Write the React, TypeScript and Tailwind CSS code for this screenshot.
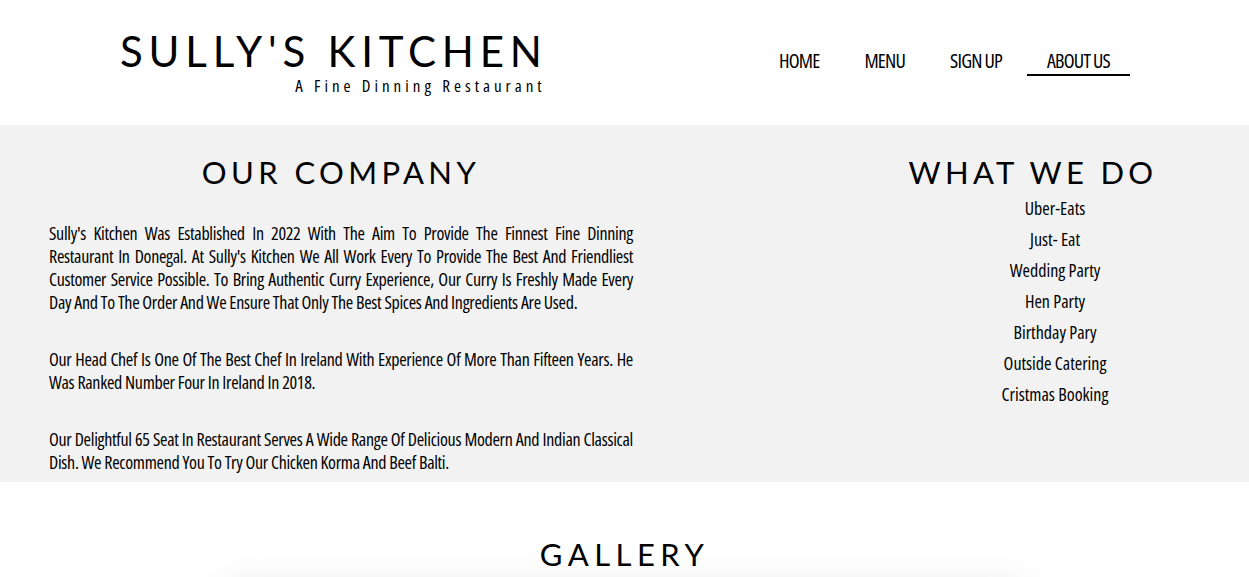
import React from "react";

export default function App() {
  const services = [
    "Uber-Eats",
    "Just- Eat",
    "Wedding Party",
    "Hen Party",
    "Birthday Pary",
    "Outside Catering",
    "Cristmas Booking",
  ];
  return (
    <div className="w-[1249px] bg-white text-black">
      <header className="h-[125px] flex items-start justify-between pl-[120px] pr-[119px]">
        <div className="flex flex-col items-end pt-[27px]">
          <div className="font-['Lato',sans-serif] text-[42px] leading-[48px] tracking-[5.8px] mr-[-6px]">
            SULLY'S KITCHEN
          </div>
          <div className="font-['Open_Sans',sans-serif] font-stretch-condensed text-[17px] leading-[20px] tracking-[4px] mt-[1px] mr-[-4px]">
            A Fine Dinning Restaurant
          </div>
        </div>
        <nav className="flex items-start gap-[5px] pt-[48px] font-['Open_Sans',sans-serif] font-stretch-condensed text-[20px] leading-[25px] tracking-[-0.8px]">
          <a className="px-[20px] pb-[1px]">HOME</a>
          <a className="px-[20px] pb-[1px]">MENU</a>
          <a className="px-[20px] pb-[1px]">SIGN UP</a>
          <a className="px-[20px] pb-[1px] border-b-2 border-black">ABOUT US</a>
        </nav>
      </header>

      <section className="h-[357px] bg-[#f2f2f2] flex">
        <div className="w-[682px] px-[49px] pt-[29px]">
          <h2 className="text-center font-['Lato',sans-serif] text-[31px] leading-[36px] tracking-[4.4px]">
            OUR COMPANY
          </h2>
          <div className="mt-[32px] font-['Open_Sans',sans-serif] font-stretch-condensed text-[18px] leading-[23px] tracking-[-0.3px] text-justify">
            <p>
              Sully's Kitchen Was Established In 2022 With The Aim To Provide The Finnest Fine Dinning Restaurant In
              Donegal. At Sully's Kitchen We All Work Every To Provide The Best And Friendliest Customer Service
              Possible. To Bring Authentic Curry Experience, Our Curry Is Freshly Made Every Day And To The Order And We
              Ensure That Only The Best Spices And Ingredients Are Used.
            </p>
            <p className="mt-[34px]">
              Our Head Chef Is One Of The Best Chef In Ireland With Experience Of More Than Fifteen Years. He Was Ranked
              Number Four In Ireland In 2018.
            </p>
            <p className="mt-[34px]">
              Our Delightful 65 Seat In Restaurant Serves A Wide Range Of Delicious Modern And Indian Classical Dish. We
              Recommend You To Try Our Chicken Korma And Beef Balti.
            </p>
          </div>
        </div>
        <div className="ml-[135px] flex-1 pt-[29px]">
          <h2 className="text-center font-['Lato',sans-serif] text-[31px] leading-[36px] tracking-[4.3px]">
            WHAT WE DO
          </h2>
          <ul className="pl-[44px] mt-[3px] font-['Open_Sans',sans-serif] font-stretch-condensed text-[18px] leading-[31px] text-center">
            {services.map((s) => (
              <li key={s}>{s}</li>
            ))}
          </ul>
        </div>
      </section>

      <section className="pt-[54px] flex flex-col items-center">
        <h2 className="font-['Lato',sans-serif] text-[31px] leading-[36px] tracking-[5.5px]">GALLERY</h2>
        <div className="mt-[18px] w-[800px] h-[300px] bg-white shadow-[0_0_40px_rgba(0,0,0,0.12)]"></div>
      </section>
    </div>
  );
}
